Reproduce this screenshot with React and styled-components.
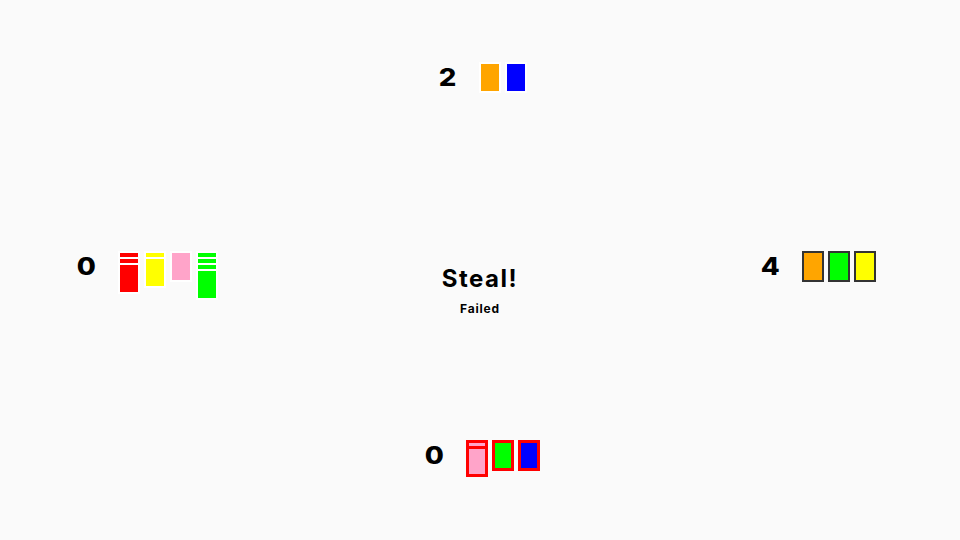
import React from "react";
import styled, { createGlobalStyle } from "styled-components";

const Global = createGlobalStyle`
  html, body { margin: 0; padding: 0; background: #fafafa; }
  body { font-family: "Inter", "Noto Sans", sans-serif; }
`;

const COLORS = {
  red: "#ff0000",
  yellow: "#ffff00",
  pink: "#ffa4c9",
  green: "#00ff00",
  blue: "#0000ff",
  orange: "#ffa500",
};

const BORDERS = {
  plain: { color: "#ffffff", width: 2 },
  dark: { color: "#333333", width: 2 },
  active: { color: "#ff0000", width: 3 },
};

const Page = styled.div`
  width: 960px;
  height: 540px;
  display: flex;
  flex-direction: column;
  background: #fafafa;
  overflow: hidden;
`;

const TopArea = styled.div`
  display: flex;
  justify-content: center;
  padding: 62px 0 0 7px;
`;

const MiddleArea = styled.div`
  margin-top: 158px;
  height: 100px;
  display: grid;
  grid-template-columns: 1fr auto 1fr;
  align-items: start;
`;

const BottomArea = styled.div`
  margin-top: 89px;
  display: flex;
  justify-content: center;
  padding-left: 6px;
`;

const Seat = styled.div`
  display: flex;
  align-items: flex-start;
  gap: 23px;
  justify-self: ${(p) => p.$align || "center"};
  margin: ${(p) => p.$margin || "0"};
`;

const Score = styled.div`
  height: 31px;
  display: flex;
  align-items: center;
  font-family: "Inter", "Noto Sans", sans-serif;
  font-weight: 800;
  font-size: 24px;
  color: #000;
  transform: scaleX(1.15);
`;

const Hand = styled.div`
  display: flex;
  align-items: flex-start;
  gap: 4px;
`;

const Stack = styled.div`
  display: flex;
  flex-direction: column;
`;

const Card = styled.div`
  box-sizing: border-box;
  width: 22px;
  height: 31px;
  background: ${(p) => p.$color};
  border: ${(p) => p.$bw}px solid ${(p) => p.$bc};
  & + & {
    margin-top: -25px;
  }
`;

const Center = styled.div`
  margin-top: 14px;
  display: flex;
  flex-direction: column;
  align-items: center;
  color: #000;
`;

const Title = styled.div`
  font-family: "Inter", "Noto Sans", sans-serif;
  font-weight: 700;
  font-size: 24px;
  line-height: 28px;
  letter-spacing: 1.5px;
`;

const Sub = styled.div`
  margin-top: 8px;
  font-family: "Inter", "Noto Sans", sans-serif;
  font-weight: 700;
  font-size: 12px;
  line-height: 15px;
  letter-spacing: 0.8px;
`;

function PlayerSeat({ score, stacks, variant = "plain", align, margin }) {
  const b = BORDERS[variant];
  return (
    <Seat $align={align} $margin={margin}>
      <Score>{score}</Score>
      <Hand>
        {stacks.map((s, i) => (
          <Stack key={i}>
            {Array.from({ length: s.count }).map((_, j) => (
              <Card key={j} $color={COLORS[s.color]} $bc={b.color} $bw={b.width} />
            ))}
          </Stack>
        ))}
      </Hand>
    </Seat>
  );
}

export default function App() {
  return (
    <>
      <Global />
      <Page>
        <TopArea>
          <PlayerSeat
            score="2"
            stacks={[
              { color: "orange", count: 1 },
              { color: "blue", count: 1 },
            ]}
          />
        </TopArea>
        <MiddleArea>
          <PlayerSeat
            align="start"
            margin="0 0 0 78px"
            score="0"
            stacks={[
              { color: "red", count: 3 },
              { color: "yellow", count: 2 },
              { color: "pink", count: 1 },
              { color: "green", count: 4 },
            ]}
          />
          <Center>
            <Title>Steal!</Title>
            <Sub>Failed</Sub>
          </Center>
          <PlayerSeat
            align="end"
            margin="0 84px 0 0"
            variant="dark"
            score="4"
            stacks={[
              { color: "orange", count: 1 },
              { color: "green", count: 1 },
              { color: "yellow", count: 1 },
            ]}
          />
        </MiddleArea>
        <BottomArea>
          <PlayerSeat
            variant="active"
            score="0"
            stacks={[
              { color: "pink", count: 2 },
              { color: "green", count: 1 },
              { color: "blue", count: 1 },
            ]}
          />
        </BottomArea>
      </Page>
    </>
  );
}
